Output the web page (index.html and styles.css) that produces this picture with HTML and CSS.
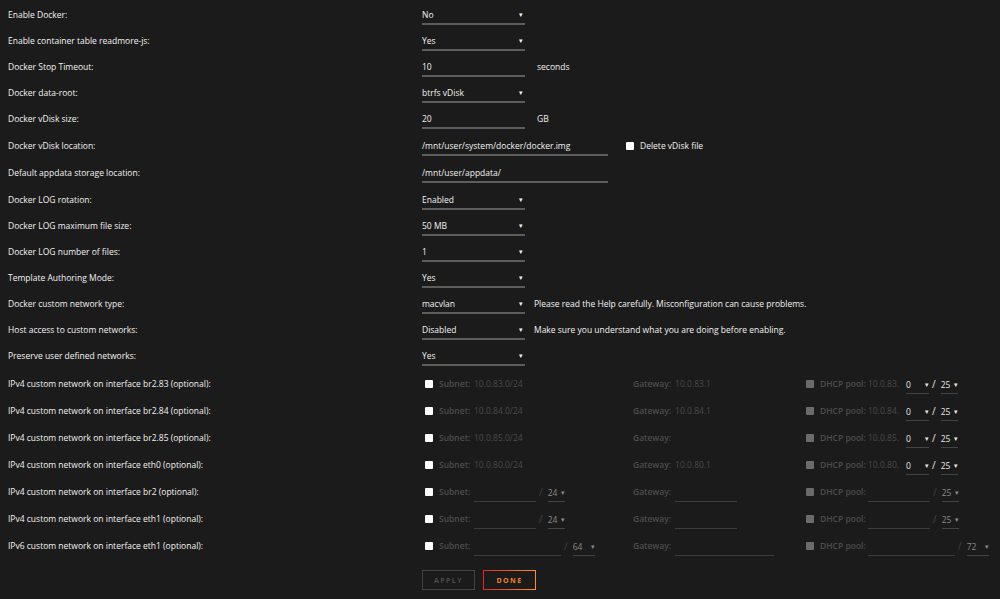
FILE: index.html
```html
<!DOCTYPE html>
<html lang="en">
<head>
    <meta charset="UTF-8">
    <title>Docker Settings</title>
    <link rel="stylesheet" href="styles.css">
</head>
<body>
    <div class="form">
        <div class="row"><div class="label">Enable Docker:</div><div class="sel w103">No<span class="arr">&#9662;</span></div></div>
        <div class="row"><div class="label">Enable container table readmore-js:</div><div class="sel w103">Yes<span class="arr">&#9662;</span></div></div>
        <div class="row"><div class="label">Docker Stop Timeout:</div><div class="inp w103">10</div><span class="unit">seconds</span></div>
        <div class="row"><div class="label">Docker data-root:</div><div class="sel w103">btrfs vDisk<span class="arr">&#9662;</span></div></div>
        <div class="row tall"><div class="label">Docker vDisk size:</div><div class="inp w103">20</div><span class="unit">GB</span></div>
        <div class="row tall"><div class="label">Docker vDisk location:</div><div class="inp w186">/mnt/user/system/docker/docker.img</div><span class="check white big"></span><span class="unit check-label">Delete vDisk file</span></div>
        <div class="row tall"><div class="label">Default appdata storage location:</div><div class="inp w186">/mnt/user/appdata/</div></div>
        <div class="row"><div class="label">Docker LOG rotation:</div><div class="sel w103">Enabled<span class="arr">&#9662;</span></div></div>
        <div class="row"><div class="label">Docker LOG maximum file size:</div><div class="sel w103">50 MB<span class="arr">&#9662;</span></div></div>
        <div class="row"><div class="label">Docker LOG number of files:</div><div class="sel w103">1<span class="arr">&#9662;</span></div></div>
        <div class="row"><div class="label">Template Authoring Mode:</div><div class="sel w103">Yes<span class="arr">&#9662;</span></div></div>
        <div class="row"><div class="label">Docker custom network type:</div><div class="sel w103">macvlan<span class="arr">&#9662;</span></div><span class="note">Please read the Help carefully. Misconfiguration can cause problems.</span></div>
        <div class="row"><div class="label">Host access to custom networks:</div><div class="sel w103">Disabled<span class="arr">&#9662;</span></div><span class="note">Make sure you understand what you are doing before enabling.</span></div>
        <div class="row"><div class="label">Preserve user defined networks:</div><div class="sel w103">Yes<span class="arr">&#9662;</span></div></div>

        <div class="row net first">
            <div class="label">IPv4 custom network on interface br2.83 (optional):</div>
            <div class="cell subnet"><span class="check white"></span><span class="dim">Subnet:</span><span class="val">10.0.83.0/24</span></div>
            <div class="cell gw"><span class="dim">Gateway:</span><span class="val">10.0.83.1</span></div>
            <div class="cell dhcp"><span class="check gray"></span><span class="dim">DHCP pool:</span><span class="val pool">10.0.83.</span><span class="mini w23">0<span class="arr">&#9662;</span></span><span class="slash bright">/</span><span class="mini w17">25<span class="arr">&#9662;</span></span></div>
        </div>
        <div class="row net">
            <div class="label">IPv4 custom network on interface br2.84 (optional):</div>
            <div class="cell subnet"><span class="check white"></span><span class="dim">Subnet:</span><span class="val">10.0.84.0/24</span></div>
            <div class="cell gw"><span class="dim">Gateway:</span><span class="val">10.0.84.1</span></div>
            <div class="cell dhcp"><span class="check gray"></span><span class="dim">DHCP pool:</span><span class="val pool">10.0.84.</span><span class="mini w23">0<span class="arr">&#9662;</span></span><span class="slash bright">/</span><span class="mini w17">25<span class="arr">&#9662;</span></span></div>
        </div>
        <div class="row net">
            <div class="label">IPv4 custom network on interface br2.85 (optional):</div>
            <div class="cell subnet"><span class="check white"></span><span class="dim">Subnet:</span><span class="val">10.0.85.0/24</span></div>
            <div class="cell gw"><span class="dim">Gateway:</span></div>
            <div class="cell dhcp"><span class="check gray"></span><span class="dim">DHCP pool:</span><span class="val pool">10.0.85.</span><span class="mini w23">0<span class="arr">&#9662;</span></span><span class="slash bright">/</span><span class="mini w17">25<span class="arr">&#9662;</span></span></div>
        </div>
        <div class="row net">
            <div class="label">IPv4 custom network on interface eth0 (optional):</div>
            <div class="cell subnet"><span class="check white"></span><span class="dim">Subnet:</span><span class="val">10.0.80.0/24</span></div>
            <div class="cell gw"><span class="dim">Gateway:</span><span class="val">10.0.80.1</span></div>
            <div class="cell dhcp"><span class="check gray"></span><span class="dim">DHCP pool:</span><span class="val pool">10.0.80.</span><span class="mini w23">0<span class="arr">&#9662;</span></span><span class="slash bright">/</span><span class="mini w17">25<span class="arr">&#9662;</span></span></div>
        </div>
        <div class="row net">
            <div class="label">IPv4 custom network on interface br2 (optional):</div>
            <div class="cell subnet"><span class="check white"></span><span class="dim">Subnet:</span><span class="line w62"></span><span class="slash">/</span><span class="mini w17 dimsel">24<span class="arr">&#9662;</span></span></div>
            <div class="cell gw"><span class="dim">Gateway:</span><span class="line w62"></span></div>
            <div class="cell dhcp"><span class="check gray"></span><span class="dim">DHCP pool:</span><span class="line w62"></span><span class="slash">/</span><span class="mini w17 dimsel">25<span class="arr">&#9662;</span></span></div>
        </div>
        <div class="row net">
            <div class="label">IPv4 custom network on interface eth1 (optional):</div>
            <div class="cell subnet"><span class="check white"></span><span class="dim">Subnet:</span><span class="line w62"></span><span class="slash">/</span><span class="mini w17 dimsel">24<span class="arr">&#9662;</span></span></div>
            <div class="cell gw"><span class="dim">Gateway:</span><span class="line w62"></span></div>
            <div class="cell dhcp"><span class="check gray"></span><span class="dim">DHCP pool:</span><span class="line w62"></span><span class="slash">/</span><span class="mini w17 dimsel">25<span class="arr">&#9662;</span></span></div>
        </div>
        <div class="row net">
            <div class="label">IPv6 custom network on interface eth1 (optional):</div>
            <div class="cell subnet"><span class="check white"></span><span class="dim">Subnet:</span><span class="line w87"></span><span class="slash">/</span><span class="mini w22 dimsel">64<span class="arr">&#9662;</span></span></div>
            <div class="cell gw"><span class="dim">Gateway:</span><span class="line w99"></span></div>
            <div class="cell dhcp"><span class="check gray"></span><span class="dim">DHCP pool:</span><span class="line w87"></span><span class="slash">/</span><span class="mini w22 dimsel">72<span class="arr">&#9662;</span></span></div>
        </div>

        <div class="buttons">
            <button class="btn apply">APPLY</button>
            <button class="btn done">DONE</button>
        </div>
    </div>
</body>
</html>
```

FILE: styles.css
```css
body {
    margin: 0;
    padding: 1px 8px 0 8px;
    background-color: #1c1b1b;
    color: #f2f2f2;
    font-family: "Open Sans", sans-serif;
    font-size: 8.5px;
}
.row {
    display: flex;
    align-items: center;
    height: 26px;
}
.row.tall {
    height: 27px;
}
.row.net {
    height: 27px;
}
.row.net.first {
    margin-top: 2px;
}
.label {
    width: 414px;
    flex: none;
}
.sel, .inp {
    position: relative;
    height: 20px;
    line-height: 17px;
    box-sizing: border-box;
    border-bottom: 2px solid #5d5d5d;
    padding-top: 1px;
    margin-top: 1px;
    color: #f2f2f2;
}
.arr {
    position: absolute;
    right: 2px;
    top: 1px;
    font-size: 7px;
}
.w103 { width: 103px; }
.w186 { width: 186px; }
.unit {
    margin-left: 12px;
}
.note {
    margin-left: 9px;
}
.check {
    display: inline-block;
    width: 8px;
    height: 8px;
    border-radius: 1px;
    flex: none;
}
.check.white {
    background: #ffffff;
}
.check.gray {
    background: #6b6b6b;
}
.check.big {
    margin-left: 18px;
}
.unit.check-label {
    margin-left: 6px;
}
.cell {
    display: flex;
    align-items: center;
    height: 27px;
    flex: none;
    white-space: nowrap;
}
.cell.subnet {
    width: 208px;
    padding-left: 3px;
}
.cell.gw {
    width: 173px;
}
.cell.dhcp {
    flex: 1;
}
.subnet .check, .dhcp .check {
    margin-right: 6px;
}
.dim {
    color: #4c4c4c;
    font-weight: 600;
    margin-right: 4px;
    white-space: nowrap;
}
.subnet .dim {
    width: 31px;
}
.dhcp .dim {
    width: 44px;
}
.val {
    color: #4a4a4a;
}
.val.pool {
    width: 38px;
}
.mini {
    position: relative;
    height: 19px;
    line-height: 17px;
    box-sizing: border-box;
    border-bottom: 1px solid #444;
    padding-top: 1px;
    color: #e6e6e6;
    margin-top: 1px;
}
.mini .arr {
    right: 0;
    top: 1px;
}
.mini.dimsel {
    color: #8a8a8a;
}
.w17 { width: 17px; }
.w22 { width: 22px; }
.w23 { width: 23px; }
.line {
    display: inline-block;
    height: 18px;
    border-bottom: 1px solid #3c3c3c;
    margin-top: 1px;
}
.w62 { width: 62px; }
.w87 { width: 87px; }
.w99 { width: 99px; }
.slash {
    color: #444;
    font-size: 10px;
    margin: 0 5px 0 3px;
}
.slash.bright {
    color: #e6e6e6;
    margin: 0 5px 0 3px;
}
.buttons {
    display: flex;
    gap: 8px;
    padding-left: 414px;
    margin-top: 11px;
}
.btn {
    height: 20px;
    width: 53px;
    background: transparent;
    font-family: "Open Sans", sans-serif;
    font-size: 7px;
    font-weight: 700;
    letter-spacing: 1.4px;
    padding: 0;
    cursor: pointer;
}
.btn.apply {
    border: 1px solid #444;
    color: #4a4a4a;
}
.btn.done {
    border: 1px solid transparent;
    background: linear-gradient(#1c1b1b, #1c1b1b) padding-box, linear-gradient(90deg, #e22828, #ff8c2f) border-box;
    color: #f08030;
}
```
